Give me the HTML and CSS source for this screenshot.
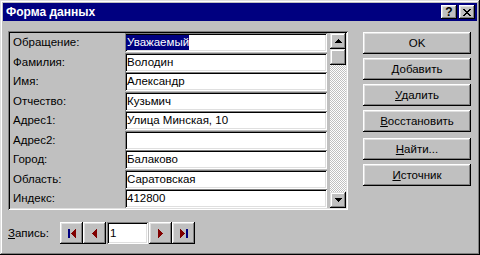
FILE: index.html
```html
<!DOCTYPE html>
<html lang="ru">
<head>
    <meta charset="UTF-8">
    <title>Форма данных</title>
    <link rel="stylesheet" href="styles.css">
</head>
<body>
    <div class="window">
        <div class="titlebar">
            <span class="title">Форма данных</span>
            <div class="title-buttons">
                <div class="tbtn help">?</div>
                <div class="tbtn">
                    <svg width="8" height="7" viewBox="0 0 8 7"><path d="M0 0h2v1H0zM6 0h2v1H6zM1 1h2v1H1zM5 1h2v1H5zM2 2h4v1H2zM3 3h2v1H3zM2 4h4v1H2zM1 5h2v1H1zM5 5h2v1H5zM0 6h2v1H0zM6 6h2v1H6z" fill="#000"/></svg>
                </div>
            </div>
        </div>

        <div class="content">
            <div class="record">
                <div class="fields">
                    <span class="label">Обращение:</span>
                    <span class="input"><span class="sel">Уважаемый</span></span>
                    <span class="label">Фамилия:</span>
                    <span class="input">Володин</span>
                    <span class="label">Имя:</span>
                    <span class="input">Александр</span>
                    <span class="label">Отчество:</span>
                    <span class="input">Кузьмич</span>
                    <span class="label">Адрес1:</span>
                    <span class="input">Улица Минская, 10</span>
                    <span class="label">Адрес2:</span>
                    <span class="input"></span>
                    <span class="label">Город:</span>
                    <span class="input">Балаково</span>
                    <span class="label">Область:</span>
                    <span class="input">Саратовская</span>
                    <span class="label">Индекс:</span>
                    <span class="input">412800</span>
                </div>
                <div class="scrollbar">
                    <div class="sb-btn">
                        <svg width="7" height="4" viewBox="0 0 7 4"><path d="M3 0h1v1H3zM2 1h3v1H2zM1 2h5v1H1zM0 3h7v1H0z" fill="#000"/></svg>
                    </div>
                    <div class="sb-thumb"></div>
                    <div class="sb-track"></div>
                    <div class="sb-btn">
                        <svg width="7" height="4" viewBox="0 0 7 4"><path d="M0 0h7v1H0zM1 1h5v1H1zM2 2h3v1H2zM3 3h1v1H3z" fill="#000"/></svg>
                    </div>
                </div>
            </div>

            <div class="actions">
                <button class="btn">OK</button>
                <button class="btn"><u>Д</u>обавить</button>
                <button class="btn"><u>У</u>далить</button>
                <button class="btn"><u>В</u>осстановить</button>
                <button class="btn spaced"><u>Н</u>айти...</button>
                <button class="btn"><u>И</u>сточник</button>
            </div>
        </div>

        <div class="nav">
            <span class="nav-label"><u>З</u>апись:</span>
            <div class="nav-btn">
                <svg width="8" height="9" viewBox="0 0 8 9"><rect x="0" y="0" width="2" height="9" fill="#000080"/><path d="M3 4h1v1H3zM4 3h1v3H4zM5 2h1v5H5zM6 1h1v7H6zM7 0h1v9H7z" fill="#800000"/></svg>
            </div>
            <div class="nav-btn">
                <svg width="5" height="9" viewBox="0 0 5 9"><path d="M0 4h1v1H0zM1 3h1v3H1zM2 2h1v5H2zM3 1h1v7H3zM4 0h1v9H4z" fill="#800000"/></svg>
            </div>
            <div class="nav-field">1</div>
            <div class="nav-btn">
                <svg width="5" height="9" viewBox="0 0 5 9"><path d="M0 0h1v9H0zM1 1h1v7H1zM2 2h1v5H2zM3 3h1v3H3zM4 4h1v1H4z" fill="#800000"/></svg>
            </div>
            <div class="nav-btn">
                <svg width="8" height="9" viewBox="0 0 8 9"><path d="M0 0h1v9H0zM1 1h1v7H1zM2 2h1v5H2zM3 3h1v3H3zM4 4h1v1H4z" fill="#800000"/><rect x="6" y="0" width="2" height="9" fill="#000080"/></svg>
            </div>
        </div>
    </div>
</body>
</html>
```

FILE: styles.css
```css
* {
    box-sizing: border-box;
}
body {
    margin: 0;
    font-family: "Liberation Sans", Arial, sans-serif;
    font-size: 11.5px;
    color: #000;
}
.window {
    width: 480px;
    height: 255px;
    padding: 3px;
    background-color: #c0c0c0;
    box-shadow: inset -1px -1px #000, inset 1px 1px #dfdfdf, inset -2px -2px #808080, inset 2px 2px #fff;
}
.titlebar {
    height: 18px;
    background-color: #000080;
    color: #fff;
    display: flex;
    align-items: center;
    justify-content: space-between;
    padding: 0 2px 0 3px;
}
.title {
    font-weight: bold;
    font-size: 12px;
}
.title-buttons {
    display: flex;
    gap: 2px;
}
.tbtn {
    width: 16px;
    height: 14px;
    background-color: #c0c0c0;
    color: #000;
    display: flex;
    align-items: center;
    justify-content: center;
    box-shadow: inset -1px -1px #000, inset 1px 1px #fff, inset -2px -2px #808080, inset 2px 2px #dfdfdf;
}
.help {
    font-weight: bold;
    font-size: 12px;
    line-height: 14px;
}

/* record panel */
.content {
    display: flex;
    align-items: flex-start;
    margin-top: 10px;
    padding-left: 5px;
}
.record {
    width: 340px;
    height: 179px;
    padding: 2px;
    display: flex;
    box-shadow: inset 1px 1px #808080, inset -1px -1px #fff, inset 2px 2px #000, inset -2px -2px #dfdfdf;
}
.fields {
    width: 317px;
    margin-right: 3px;
    overflow: hidden;
    display: grid;
    grid-template-columns: 115px 202px;
    grid-auto-rows: 19px;
    row-gap: 0.5px;
    align-content: start;
}
.label {
    padding-left: 3px;
    line-height: 19px;
    white-space: nowrap;
}
.input {
    background-color: #fff;
    padding: 2px;
    line-height: 15px;
    white-space: nowrap;
    overflow: hidden;
    box-shadow: inset 1px 1px #808080, inset -1px -1px #fff, inset 2px 2px #000, inset -2px -2px #dfdfdf;
}
.sel {
    display: inline-block;
    background-color: #000080;
    color: #fff;
    margin-left: -1px;
    padding-left: 1px;
}
.scrollbar {
    width: 16px;
    display: flex;
    flex-direction: column;
}
.sb-btn,
.sb-thumb {
    height: 16px;
    background-color: #c0c0c0;
    display: flex;
    align-items: center;
    justify-content: center;
    box-shadow: inset -1px -1px #000, inset 1px 1px #dfdfdf, inset -2px -2px #808080, inset 2px 2px #fff;
}
.sb-track {
    flex: 1;
    background: repeating-conic-gradient(#c0c0c0 0 25%, #fff 0 50%) 0 0 / 2px 2px;
}

/* buttons on the right */
.actions {
    width: 108px;
    margin: 1px 0 0 15px;
    display: flex;
    flex-direction: column;
    gap: 4px;
}
.btn {
    height: 22px;
    border: none;
    padding: 0;
    background-color: #c0c0c0;
    font-family: inherit;
    font-size: 11.5px;
    color: #000;
    box-shadow: inset -1px -1px #000, inset 1px 1px #fff, inset -2px -2px #808080, inset 2px 2px #dfdfdf;
}
.btn.spaced {
    margin-top: 2px;
}
u {
    text-underline-offset: 1px;
}

/* record navigation */
.nav {
    display: flex;
    align-items: center;
    height: 22px;
    margin-top: 12px;
    padding-left: 5px;
}
.nav-label {
    width: 52px;
}
.nav-btn {
    width: 23px;
    height: 22px;
    background-color: #c0c0c0;
    display: flex;
    align-items: center;
    justify-content: center;
    box-shadow: inset -1px -1px #000, inset 1px 1px #fff, inset -2px -2px #808080, inset 2px 2px #dfdfdf;
}
.nav-field {
    width: 41px;
    height: 22px;
    margin: 0 1px;
    padding: 2px 3px;
    line-height: 18px;
    background-color: #fff;
    box-shadow: inset 1px 1px #808080, inset -1px -1px #fff, inset 2px 2px #000, inset -2px -2px #dfdfdf;
}
```
